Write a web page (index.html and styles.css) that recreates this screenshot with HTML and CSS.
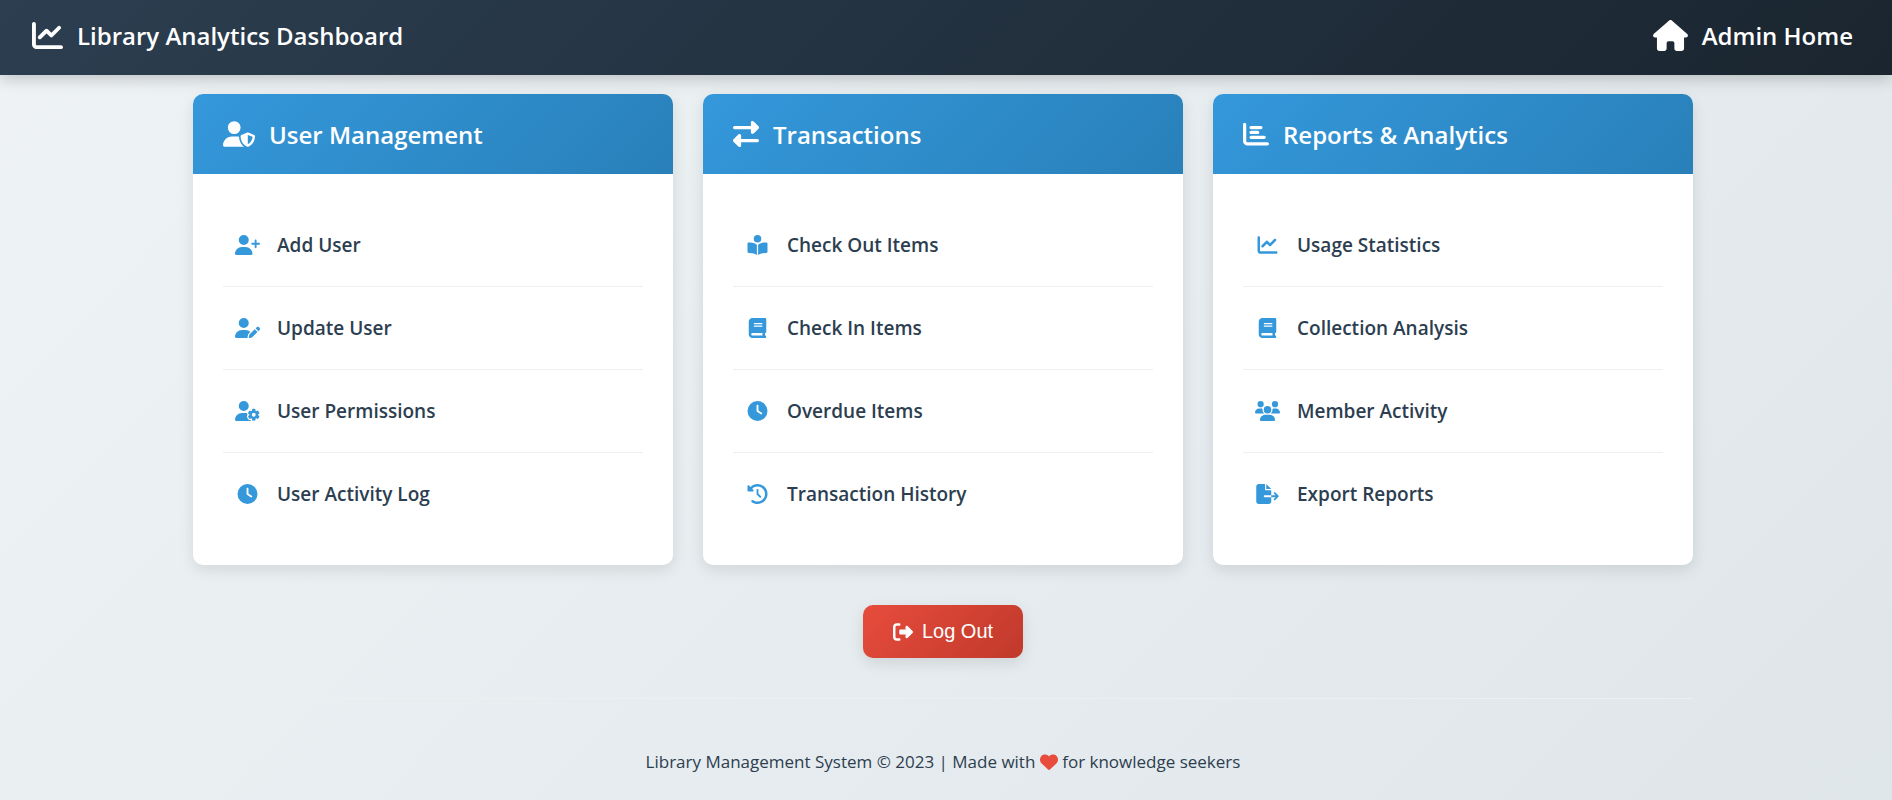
FILE: index.html
```html
<!DOCTYPE html>
<html lang="en">
<head>
<meta charset="utf-8">
<title>Library Analytics Dashboard</title>
<link rel="stylesheet" href="styles.css">
</head>
<body>
<svg class="sprite" aria-hidden="true">
  <symbol id="chart-line" viewBox="0 0 512 512"><path d="M64 64c0-17.7-14.3-32-32-32S0 46.3 0 64V400c0 44.2 35.8 80 80 80H480c17.7 0 32-14.3 32-32s-14.3-32-32-32H80c-8.8 0-16-7.2-16-16V64zm406.6 86.6c12.5-12.5 12.5-32.8 0-45.3s-32.8-12.5-45.3 0L320 210.7l-57.4-57.4c-12.5-12.5-32.8-12.5-45.3 0l-112 112c-12.5 12.5-12.5 32.8 0 45.3s32.8 12.5 45.3 0L240 221.3l57.4 57.4c12.5 12.5 32.8 12.5 45.3 0l128-128z"/></symbol>
  <symbol id="house" viewBox="0 0 576 512"><path d="M575.8 255.5c0 18-15 32.1-32 32.1h-32l.7 160.2c0 2.7-.2 5.4-.5 8.1V472c0 22.1-17.9 40-40 40H456c-1.1 0-2.2 0-3.3-.1c-1.4 .1-2.8 .1-4.2 .1H416 392c-22.1 0-40-17.9-40-40V448 384c0-17.7-14.3-32-32-32H256c-17.7 0-32 14.3-32 32v64 24c0 22.1-17.9 40-40 40H160 128.1c-1.5 0-3-.1-4.5-.2c-1.2 .1-2.4 .2-3.6 .2H104c-22.1 0-40-17.9-40-40V360c0-.9 0-1.9 .1-2.8V287.6H32c-18 0-32-14-32-32.1c0-9 3-17 10-24L266.4 8c7-7 15-8 22-8s15 2 21 7L564.8 231.5c8 7 12 15 11 24z"/></symbol>
  <symbol id="user-shield" viewBox="0 0 640 512"><path d="M224 256A128 128 0 1 0 224 0a128 128 0 1 0 0 256zm-45.7 48C79.8 304 0 383.8 0 482.3C0 498.7 13.3 512 29.7 512H418.3c1.8 0 3.5-.2 5.3-.5c-76.3-55.1-99.8-141-103.1-200.2c-16.1-4.8-33.1-7.3-50.7-7.3H178.3zm308.8-78.3l-120 48C358 277.4 352 286.2 352 296c0 63.3 25.9 168.8 134.8 214.2c5.9 2.5 12.6 2.5 18.5 0C614.1 464.8 640 359.3 640 296c0-9.8-6-18.6-15.1-22.3l-120-48c-5.7-2.3-12.1-2.3-17.8 0zM591.4 312c-3.9 50.7-27.2 116.7-95.4 149.7V273.8L591.4 312z"/></symbol>
  <symbol id="user-plus" viewBox="0 0 640 512"><path d="M96 128a128 128 0 1 1 256 0A128 128 0 1 1 96 128zM0 482.3C0 383.8 79.8 304 178.3 304h91.4C368.2 304 448 383.8 448 482.3c0 16.4-13.3 29.7-29.7 29.7H29.7C13.3 512 0 498.7 0 482.3zM504 312V248H440c-13.3 0-24-10.7-24-24s10.7-24 24-24h64V136c0-13.3 10.7-24 24-24s24 10.7 24 24v64h64c13.3 0 24 10.7 24 24s-10.7 24-24 24H552v64c0 13.3-10.7 24-24 24s-24-10.7-24-24z"/></symbol>
  <symbol id="user-pen" viewBox="0 0 640 512"><path d="M224 256A128 128 0 1 0 224 0a128 128 0 1 0 0 256zm-45.7 48C79.8 304 0 383.8 0 482.3C0 498.7 13.3 512 29.7 512H322.8c-3.1-8.8-3.7-18.4-1.4-27.8l15-60.1c2.8-11.3 8.6-21.5 16.8-29.7l40.3-40.3c-32.1-31-75.7-50.1-123.9-50.1H178.3zm435.5-68.3c-15.6-15.6-40.9-15.6-56.6 0l-29.4 29.4 71 71 29.4-29.4c15.6-15.6 15.6-40.9 0-56.6l-14.4-14.4zM375.9 417c-4.1 4.1-7 9.2-8.4 14.9l-15 60.1c-1.4 5.5 .2 11.2 4.2 15.2s9.7 5.6 15.2 4.2l60.1-15c5.6-1.4 10.8-4.3 14.9-8.4L576.1 358.7l-71-71L375.9 417z"/></symbol>
  <symbol id="user-gear" viewBox="0 0 640 512"><path d="M224 0a128 128 0 1 1 0 256A128 128 0 1 1 224 0zM178.3 304h91.4c11.8 0 23.4 1.2 34.5 3.3c-2.1 18.5 7.4 35.6 21.8 44.8c-16.6 10.6-26.7 31.6-20 53.3c4 12.9 9.4 25.5 16.4 37.6s15.2 23.1 24.4 33c15.7 16.9 39.6 18.4 57.2 8.7v.9c0 9.2 2.7 18.5 7.9 26.3H29.7C13.3 512 0 498.7 0 482.3C0 383.8 79.8 304 178.3 304zM436 218.2c0-7 4.5-13.3 11.3-14.8c10.5-2.4 21.5-3.7 32.7-3.7s22.2 1.3 32.7 3.7c6.8 1.5 11.3 7.8 11.3 14.8v30.6c7.9 3.4 15.4 7.7 22.3 12.8l24.9-14.3c6.1-3.5 13.7-2.7 18.5 2.4c7.6 8.1 14.3 17.2 20.1 27.2s10.3 20.4 13.5 31c2.1 6.7-1.1 13.7-7.2 17.2l-25 14.4c.4 4 .7 8.1 .7 12.3s-.2 8.2-.7 12.3l25 14.4c6.1 3.5 9.2 10.5 7.2 17.2c-3.3 10.6-7.8 21-13.5 31s-12.5 19.1-20.1 27.2c-4.8 5.1-12.5 5.9-18.5 2.4l-24.9-14.3c-6.9 5.1-14.3 9.4-22.3 12.8l0 30.6c0 7-4.5 13.3-11.3 14.8c-10.5 2.4-21.5 3.7-32.7 3.7s-22.2-1.3-32.7-3.7c-6.8-1.5-11.3-7.8-11.3-14.8V454.8c-8-3.4-15.6-7.7-22.5-12.9l-24.7 14.3c-6.1 3.5-13.7 2.7-18.5-2.4c-7.6-8.1-14.3-17.2-20.1-27.2s-10.3-20.4-13.5-31c-2.1-6.7 1.1-13.7 7.2-17.2l24.8-14.3c-.4-4.1-.7-8.2-.7-12.4s.2-8.3 .7-12.4L343.8 325c-6.1-3.5-9.2-10.5-7.2-17.2c3.3-10.6 7.7-21 13.5-31s12.5-19.1 20.1-27.2c4.8-5.1 12.4-5.9 18.5-2.4l24.8 14.3c6.9-5.1 14.5-9.4 22.5-12.9V218.2zm92.1 133.5a48.1 48.1 0 1 0 -96.1 0 48.1 48.1 0 1 0 96.1 0z"/></symbol>
  <symbol id="clock" viewBox="0 0 512 512"><path d="M256 0a256 256 0 1 1 0 512A256 256 0 1 1 256 0zM232 120V256c0 8 4 15.5 10.7 20l96 64c11 7.4 25.9 4.4 33.3-6.7s4.4-25.9-6.7-33.3L280 243.2V120c0-13.3-10.7-24-24-24s-24 10.7-24 24z"/></symbol>
  <symbol id="right-left" viewBox="0 0 512 512"><path d="M32 96l320 0V32c0-12.9 7.8-24.6 19.8-29.6s25.7-2.2 34.9 6.9l96 96c6 6 9.4 14.1 9.4 22.6s-3.4 16.6-9.4 22.6l-96 96c-9.2 9.2-22.9 11.9-34.9 6.9s-19.8-16.6-19.8-29.6V160L32 160c-17.7 0-32-14.3-32-32s14.3-32 32-32zM480 352c17.7 0 32 14.3 32 32s-14.3 32-32 32H160v64c0 12.9-7.8 24.6-19.8 29.6s-25.7 2.2-34.9-6.9l-96-96c-6-6-9.4-14.1-9.4-22.6s3.4-16.6 9.4-22.6l96-96c9.2-9.2 22.9-11.9 34.9-6.9s19.8 16.6 19.8 29.6l0 64H480z"/></symbol>
  <symbol id="book-reader" viewBox="0 0 512 512"><path d="M160 96a96 96 0 1 1 192 0A96 96 0 1 1 160 96zm80 152V512l-48.4-24.2c-20.9-10.4-43.5-17-66.8-19.3l-96-9.6C12.5 457.2 0 443.5 0 427V224c0-17.7 14.3-32 32-32H62.3c63.6 0 125.6 19.6 177.7 56zm32 264V248c52.1-36.4 114.1-56 177.7-56H480c17.7 0 32 14.3 32 32V427c0 16.4-12.5 30.2-28.8 31.8l-96 9.6c-23.2 2.3-45.9 8.9-66.8 19.3L272 512z"/></symbol>
  <symbol id="book" viewBox="0 0 448 512"><path d="M96 0C43 0 0 43 0 96V416c0 53 43 96 96 96H384h32c17.7 0 32-14.3 32-32s-14.3-32-32-32V384c17.7 0 32-14.3 32-32V32c0-17.7-14.3-32-32-32H384 96zm0 384H352v64H96c-17.7 0-32-14.3-32-32s14.3-32 32-32zm32-240c0-8.8 7.2-16 16-16H336c8.8 0 16 7.2 16 16s-7.2 16-16 16H144c-8.8 0-16-7.2-16-16zm16 48H336c8.8 0 16 7.2 16 16s-7.2 16-16 16H144c-8.8 0-16-7.2-16-16s7.2-16 16-16z"/></symbol>
  <symbol id="history" viewBox="0 0 512 512"><path d="M75 75L41 41C25.9 25.9 0 36.6 0 57.9V168c0 13.3 10.7 24 24 24H134.1c21.4 0 32.1-25.9 17-41l-30.8-30.8C155 85.5 203 64 256 64c106 0 192 86 192 192s-86 192-192 192c-40.8 0-78.6-12.7-109.7-34.4c-14.5-10.1-34.4-6.6-44.6 7.9s-6.6 34.4 7.9 44.6C151.2 495 201.7 512 256 512c141.4 0 256-114.6 256-256S397.4 0 256 0C185.3 0 121.3 28.7 75 75zm181 53c-13.3 0-24 10.7-24 24V256c0 6.4 2.5 12.5 7 17l72 72c9.4 9.4 24.6 9.4 33.9 0s9.4-24.6 0-33.9l-65-65V152c0-13.3-10.7-24-24-24z"/></symbol>
  <symbol id="chart-bar" viewBox="0 0 512 512"><path d="M32 32c17.7 0 32 14.3 32 32V400c0 8.8 7.2 16 16 16H480c17.7 0 32 14.3 32 32s-14.3 32-32 32H80c-44.2 0-80-35.8-80-80V64C0 46.3 14.3 32 32 32zm96 96c0-17.7 14.3-32 32-32l192 0c17.7 0 32 14.3 32 32s-14.3 32-32 32H160c-17.7 0-32-14.3-32-32zm32 64H288c17.7 0 32 14.3 32 32s-14.3 32-32 32H160c-17.7 0-32-14.3-32-32s14.3-32 32-32zm0 96H416c17.7 0 32 14.3 32 32s-14.3 32-32 32H160c-17.7 0-32-14.3-32-32s14.3-32 32-32z"/></symbol>
  <symbol id="users" viewBox="0 0 640 512"><path d="M144 0a80 80 0 1 1 0 160A80 80 0 1 1 144 0zM512 0a80 80 0 1 1 0 160A80 80 0 1 1 512 0zM0 298.7C0 239.8 47.8 192 106.7 192h42.7c15.9 0 31 3.5 44.6 9.7c-1.3 7.2-1.9 14.7-1.9 22.3c0 38.2 16.8 72.5 43.3 96c-.2 0-.4 0-.7 0H21.3C9.6 320 0 310.4 0 298.7zM405.3 320c-.2 0-.4 0-.7 0c26.6-23.5 43.3-57.8 43.3-96c0-7.6-.7-15-1.9-22.3c13.6-6.3 28.7-9.7 44.6-9.7h42.7C592.2 192 640 239.8 640 298.7c0 11.8-9.6 21.3-21.3 21.3H405.3zM224 224a96 96 0 1 1 192 0 96 96 0 1 1 -192 0zM128 485.3C128 411.7 187.7 352 261.3 352H378.7C452.3 352 512 411.7 512 485.3c0 14.7-11.9 26.7-26.7 26.7H154.7c-14.7 0-26.7-11.9-26.7-26.7z"/></symbol>
  <symbol id="file-export" viewBox="0 0 576 512"><path d="M0 64C0 28.7 28.7 0 64 0H224V128c0 17.7 14.3 32 32 32H384V288H216c-13.3 0-24 10.7-24 24s10.7 24 24 24H384V448c0 35.3-28.7 64-64 64H64c-35.3 0-64-28.7-64-64V64zM384 336V288H494.1l-39-39c-9.4-9.4-9.4-24.6 0-33.9s24.6-9.4 33.9 0l80 80c9.4 9.4 9.4 24.6 0 33.9l-80 80c-9.4 9.4-24.6 9.4-33.9 0s-9.4-24.6 0-33.9l39-39H384zm0-208H256V0L384 128z"/></symbol>
  <symbol id="log-out" viewBox="0 0 512 512"><path d="M377.9 105.9L500.7 228.7c7.2 7.2 11.3 17.1 11.3 27.3s-4.1 20.1-11.3 27.3L377.9 406.1c-6.4 6.4-15 9.9-24 9.9c-18.7 0-33.9-15.2-33.9-33.9l0-62.1-128 0c-17.7 0-32-14.3-32-32l0-64c0-17.7 14.3-32 32-32l128 0 0-62.1c0-18.7 15.2-33.9 33.9-33.9c9 0 17.6 3.6 24 9.9zM160 96L96 96c-17.7 0-32 14.3-32 32l0 256c0 17.7 14.3 32 32 32l64 0c17.7 0 32 14.3 32 32s-14.3 32-32 32l-64 0c-53 0-96-43-96-96L0 128C0 75 43 32 96 32l64 0c17.7 0 32 14.3 32 32s-14.3 32-32 32z"/></symbol>
  <symbol id="heart" viewBox="0 0 512 512"><path d="M47.6 300.4L228.3 469.1c7.5 7 17.4 10.9 27.7 10.9s20.2-3.9 27.7-10.9L464.4 300.4c30.4-28.3 47.6-68 47.6-109.5v-5.8c0-69.9-50.5-129.5-119.4-141C347 36.5 300.6 51.4 268 84L256 96 244 84c-32.6-32.6-79-47.5-124.6-39.9C50.5 55.6 0 115.2 0 185.1v5.8c0 41.5 17.2 81.2 47.6 109.5z"/></symbol>
</svg>

<header class="topbar">
  <h1 class="brand"><svg class="icon icon-top"><use href="#chart-line"/></svg>Library Analytics Dashboard</h1>
  <a class="brand" href="#"><svg class="icon icon-home"><use href="#house"/></svg>Admin Home</a>
</header>

<main class="container">
  <div class="cards">
    <section class="card">
      <h2 class="card-header"><svg class="icon icon-card-wide"><use href="#user-shield"/></svg>User Management</h2>
      <ul class="menu">
        <li><a href="#"><svg class="icon icon-menu"><use href="#user-plus"/></svg>Add User</a></li>
        <li><a href="#"><svg class="icon icon-menu"><use href="#user-pen"/></svg>Update User</a></li>
        <li><a href="#"><svg class="icon icon-menu"><use href="#user-gear"/></svg>User Permissions</a></li>
        <li><a href="#"><svg class="icon icon-menu"><use href="#clock"/></svg>User Activity Log</a></li>
      </ul>
    </section>
    <section class="card">
      <h2 class="card-header"><svg class="icon icon-card"><use href="#right-left"/></svg>Transactions</h2>
      <ul class="menu">
        <li><a href="#"><svg class="icon icon-menu"><use href="#book-reader"/></svg>Check Out Items</a></li>
        <li><a href="#"><svg class="icon icon-menu"><use href="#book"/></svg>Check In Items</a></li>
        <li><a href="#"><svg class="icon icon-menu"><use href="#clock"/></svg>Overdue Items</a></li>
        <li><a href="#"><svg class="icon icon-menu"><use href="#history"/></svg>Transaction History</a></li>
      </ul>
    </section>
    <section class="card">
      <h2 class="card-header"><svg class="icon icon-card"><use href="#chart-bar"/></svg>Reports &amp; Analytics</h2>
      <ul class="menu">
        <li><a href="#"><svg class="icon icon-menu"><use href="#chart-line"/></svg>Usage Statistics</a></li>
        <li><a href="#"><svg class="icon icon-menu"><use href="#book"/></svg>Collection Analysis</a></li>
        <li><a href="#"><svg class="icon icon-menu"><use href="#users"/></svg>Member Activity</a></li>
        <li><a href="#"><svg class="icon icon-menu"><use href="#file-export"/></svg>Export Reports</a></li>
      </ul>
    </section>
  </div>
  <button class="logout" type="button"><svg class="icon icon-button"><use href="#log-out"/></svg>Log Out</button>
  <footer class="footer">Library Management System © 2023 | Made with <svg class="icon icon-heart" role="img" aria-label="love"><use href="#heart"/></svg> for knowledge seekers</footer>
</main>
</body>
</html>
```
FILE: styles.css
```css
* {
  box-sizing: border-box;
  margin: 0;
  padding: 0;
}

body {
  min-height: 100vh;
  background: linear-gradient(135deg, #eff3f6, #dfe6e9);
  color: #2c3e50;
  font-family: "Segoe UI", "Open Sans", sans-serif;
}

.sprite {
  display: none;
}

.icon {
  flex: none;
  fill: currentColor;
}

.topbar {
  display: flex;
  align-items: center;
  justify-content: space-between;
  height: 75px;
  padding: 0 39px 4px 32px;
  background: linear-gradient(135deg, #2c3e50, #1a252f);
  box-shadow: 0 4px 15px rgba(0, 0, 0, 0.2);
  color: #fff;
}

.brand {
  display: flex;
  align-items: center;
  gap: 14px;
  color: inherit;
  font-size: 24px;
  font-weight: 600;
  text-decoration: none;
}

.icon-top {
  width: 31px;
  height: 31px;
}

.icon-home {
  width: 35px;
  height: 31px;
}

.container {
  display: flex;
  flex-direction: column;
  align-items: center;
  max-width: 1506px;
  margin: 19px auto 0;
  padding-right: 6px;
}

.cards {
  display: grid;
  grid-template-columns: repeat(auto-fit, minmax(350px, 1fr));
  gap: 30px;
  width: 100%;
}

.card {
  overflow: hidden;
  border-radius: 10px;
  background: #fff;
  box-shadow: 0 5px 15px rgba(0, 0, 0, 0.1);
}

.card-header {
  display: flex;
  align-items: center;
  gap: 14px;
  height: 80px;
  padding: 0 30px;
  background: linear-gradient(135deg, #3498db, #2980b9);
  color: #fff;
  font-size: 24px;
  font-weight: 600;
}

.icon-card {
  width: 26px;
  height: 26px;
}

.icon-card-wide {
  width: 32px;
  height: 26px;
}

.menu {
  padding: 30px;
  list-style: none;
}

.menu li + li {
  border-top: 1px solid #ecf0f1;
}

.menu a {
  display: flex;
  align-items: center;
  gap: 17px;
  height: 82px;
  padding: 0 12px;
  color: inherit;
  font-size: 19px;
  font-weight: 600;
  text-decoration: none;
}

.icon-menu {
  width: 25px;
  height: 20px;
  color: #3498db;
}

.logout {
  display: flex;
  align-items: center;
  gap: 9px;
  margin: 40px 0;
  padding: 15px 30px;
  border: 0;
  border-radius: 10px;
  background: linear-gradient(135deg, #e74c3c, #c0392b);
  box-shadow: 0 5px 15px rgba(0, 0, 0, 0.1);
  color: #fff;
  font: 20px/23px "Liberation Sans", sans-serif;
}

.icon-button {
  width: 20px;
  height: 20px;
}

.footer {
  width: 100%;
  padding: 50px 20px 24px;
  border-top: 1px solid #ecf0f1;
  font-size: 17px;
  line-height: 26px;
  text-align: center;
}

.icon-heart {
  width: 18px;
  height: 18px;
  color: #e74c3c;
  vertical-align: -3px;
}
```
